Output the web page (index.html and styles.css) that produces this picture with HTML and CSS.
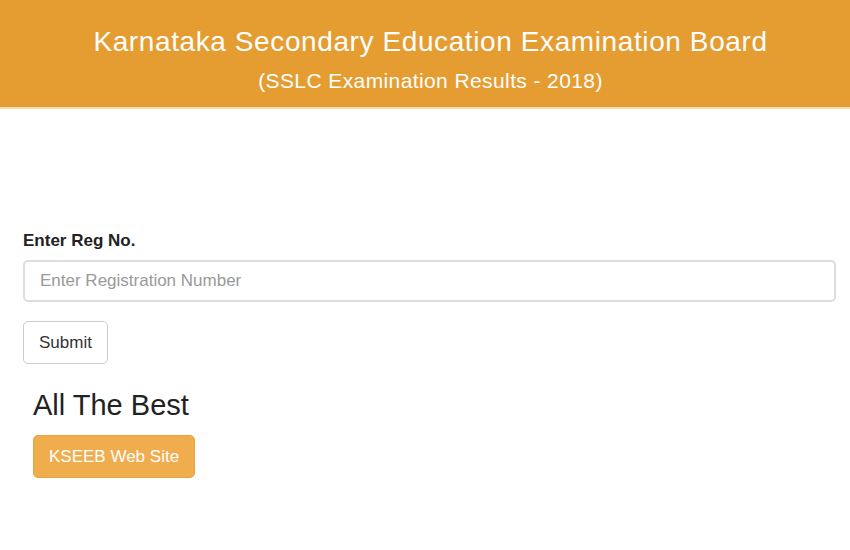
FILE: index.html
```html
<!DOCTYPE html>
<html>
<head>
<meta charset="utf-8">
<link rel="stylesheet" href="styles.css">
</head>
<body>
<header class="header">
  <h1 class="title">Karnataka Secondary Education Examination Board</h1>
  <p class="subtitle">(SSLC Examination Results - 2018)</p>
</header>
<main class="main">
  <form class="form">
    <label class="label" for="reg">Enter Reg No.</label>
    <input class="input" id="reg" type="text" placeholder="Enter Registration Number">
    <button class="submit" type="button">Submit</button>
  </form>
  <section class="best">
    <h2 class="best-title">All The Best</h2>
    <a class="site-btn" href="#">KSEEB Web Site</a>
  </section>
</main>
</body>
</html>
```
FILE: styles.css
```css
* { box-sizing: border-box; }
body {
  margin: 0;
  font-family: "Liberation Sans", Arial, sans-serif;
  color: #333;
  background: #fff;
}
.header {
  background: #e59d31;
  height: 109px;
  display: flex;
  flex-direction: column;
  align-items: center;
  padding-top: 26px;
  padding-left: 11px;
  border-bottom: 2px solid #f5dcb5;
}
.title {
  margin: 0;
  font-weight: normal;
  font-size: 28px;
  line-height: 32px;
  letter-spacing: 0.6px;
  color: #fff;
}
.subtitle {
  margin: 11px 0 0;
  font-size: 21px;
  line-height: 24px;
  letter-spacing: 0.4px;
  color: #fff;
}
.main {
  padding: 122px 14px 0 23px;
}
.form {
  display: flex;
  flex-direction: column;
  align-items: flex-start;
}
.label {
  font-weight: bold;
  font-size: 17px;
  line-height: 20px;
  color: #222;
  margin-bottom: 9px;
}
.input {
  width: 100%;
  height: 42px;
  border: 2px solid #ddd;
  border-radius: 5px;
  padding: 0 15px;
  font-family: inherit;
  font-size: 17px;
  color: #555;
}
.input::placeholder { color: #999; }
.submit {
  margin-top: 19px;
  height: 43px;
  padding: 0 15px;
  border: 1px solid #ccc;
  border-radius: 5px;
  background: #fff;
  font-family: inherit;
  font-size: 17px;
  color: #333;
}
.best {
  padding-left: 10px;
  margin-top: 25px;
  display: flex;
  flex-direction: column;
  align-items: flex-start;
}
.best-title {
  margin: 0;
  font-weight: normal;
  font-size: 29px;
  line-height: 32px;
  color: #222;
}
.site-btn {
  margin-top: 14px;
  display: inline-flex;
  align-items: center;
  height: 43px;
  padding: 0 15px;
  background: #f0ad4e;
  border: 1px solid #eea236;
  border-radius: 5px;
  color: #fff;
  text-decoration: none;
  font-size: 17px;
}
```
